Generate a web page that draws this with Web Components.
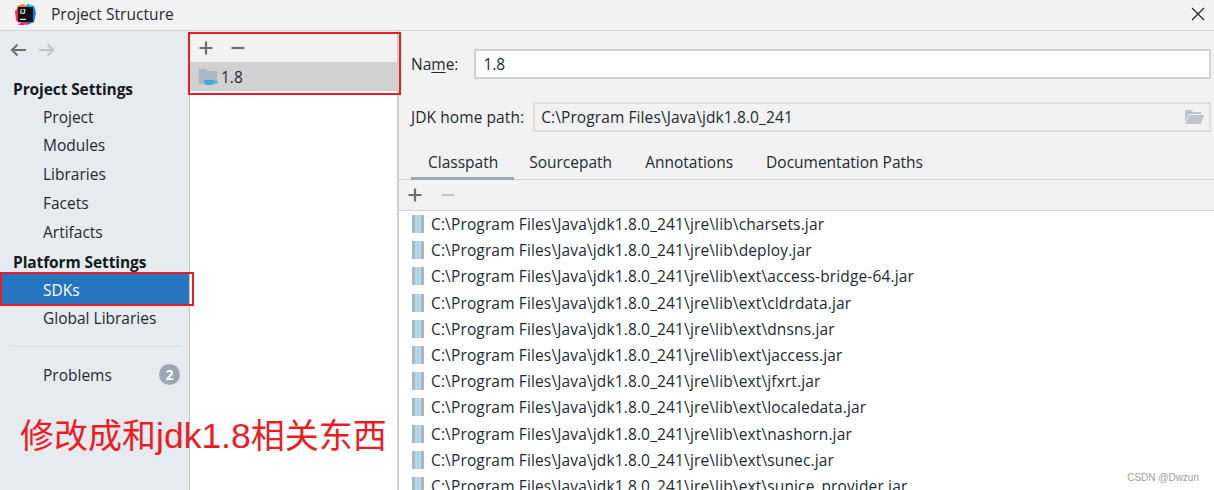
<!DOCTYPE html>
<html lang="en"><head><meta charset="utf-8">
<style>
html,body{margin:0;padding:0;height:490px;overflow:hidden;background:#f2f2f2}
body{font-family:"Open Sans","Noto Sans","Noto Sans CJK SC",sans-serif;font-size:15.5px;color:#1a1a1a}
</style></head><body>
<ps-window></ps-window>
<script>
const def=(name,html)=>{customElements.define(name,class extends HTMLElement{
  connectedCallback(){ if(this.shadowRoot) return; const r=this.attachShadow({mode:'open'}); r.innerHTML=html; }
});};
const plus=(c)=>`<svg width="16" height="16" viewBox="0 0 16 16"><path d="M8 1.500v13M1.500 8h13" stroke="${c}" stroke-width="2.2" fill="none"/></svg>`;
const minus=(c)=>`<svg width="16" height="16" viewBox="0 0 16 16"><path d="M1.500 8h13" stroke="${c}" stroke-width="2.2" fill="none"/></svg>`;

def('title-bar',`<style>
:host{display:flex;align-items:center;height:31px;box-sizing:border-box;border-bottom:1px solid #d4d4d4;background:#f2f2f2;padding:0 9px 2px 15px}
.t{margin-left:15px;font-size:15.5px;flex:1;color:#1f2a33;letter-spacing:.05px}
</style>
<svg width="21" height="21" viewBox="0 0 21 21"><path d="M2 2 9 0l3 3-4 6-4 4z" fill="#fc801d"/><path d="M0 7l3-3 3 8-2 7-3-3z" fill="#fe2857"/><path d="M12 0l7 2 2 7-2 9-7 3-6-3z" fill="#087cfa"/><path d="M12 0l7 2-1 4-5-3z" fill="#07c3f2"/><path d="M3 21l5-5 5 3-4 2z" fill="#fe2857"/><rect x="3" y="3" width="15" height="15" fill="#111"/><text x="5" y="10.200" font-size="6.500" font-weight="700" font-family="Liberation Sans" fill="#fff">IJ</text><rect x="5" y="14.800" width="6" height="1.100" fill="#fff"/></svg>
<span class="t">Project Structure</span>
<svg width="14" height="14" viewBox="0 0 14 14"><path d="M1 1l12 12M13 1 1 13" stroke="#222" stroke-width="1.2" fill="none"/></svg>`);

def('nav-head',`<style>:host{display:block;padding-left:13px;font-weight:700;font-size:15.5px;line-height:20px;color:#15191d;letter-spacing:-.1px}</style><slot></slot>`);
def('nav-item',`<style>:host{display:flex;align-items:center;height:28.8px;padding-left:43px;font-size:15.5px;color:#1d2a33;box-sizing:border-box}
:host([selected]){background:#2675bf;color:#fff}</style><slot></slot><slot name="end"></slot>`);

def('side-nav',`<style>
:host{display:flex;flex-direction:column;width:189px;flex:none;background:#e6ebf0;border-right:1px solid #c8c8c8;height:100%}
.hist{display:flex;gap:11px;align-items:center;padding-left:10px;height:38px;margin-bottom:10px}
.h1{margin-bottom:3.300px}
.h2{margin-top:5.900px}
.sep{height:1px;background:#dde1e5;margin:15px 9px 13px 10px}
.badge{margin-left:auto;margin-right:9px;width:21px;height:21px;border-radius:50%;background:#9ba7b3;color:#fff;font:700 14px/21px "Open Sans",sans-serif;text-align:center}
.note{margin:24px 0 0 20px;color:#ed1c24;font-size:34px;line-height:46px;white-space:nowrap;font-family:"Liberation Sans","Noto Sans CJK SC",sans-serif;width:380px;position:relative;z-index:3}
.note span{font-size:35.500px}
</style>
<div class="hist">
<svg width="17" height="14" viewBox="0 0 17 14"><path d="M16 7H2M7.500 1.500 2 7l5.500 5.500" stroke="#6e6e6e" stroke-width="2" fill="none"/></svg>
<svg width="17" height="14" viewBox="0 0 17 14"><path d="M1 7h14M9.500 1.500 15 7l-5.500 5.500" stroke="#c2c2c2" stroke-width="2" fill="none"/></svg>
</div>
<nav-head class="h1">Project Settings</nav-head>
<nav-item>Project</nav-item><nav-item>Modules</nav-item><nav-item>Libraries</nav-item><nav-item>Facets</nav-item><nav-item>Artifacts</nav-item>
<nav-head class="h2">Platform Settings</nav-head>
<nav-item selected style="height:32px;padding-top:3px">SDKs</nav-item>
<nav-item style="height:27px">Global Libraries</nav-item>
<div class="sep"></div>
<nav-item style="height:29px">Problems<span class="badge" slot="end">2</span></nav-item>
<div class="note">修改成和<span>jdk1.8</span>相关东西</div>`);

def('sdk-list',`<style>
:host{display:block;width:207px;flex:none;background:#fff;border-right:2px solid #d0d0d0;height:100%}
.bar{display:flex;gap:16px;align-items:center;height:31px;box-sizing:border-box;padding:2px 0 0 8px;background:#f2f2f2}
.row{display:flex;align-items:center;height:29px;background:#d1d1d1;padding-left:9px;gap:2px;font-size:15.5px;color:#1d2a33}
</style>
<div class="bar">${plus('#6e6e6e')}${minus('#6e6e6e')}</div>
<div class="row"><svg width="20" height="20" viewBox="0 0 20 20"><path d="M0 2h7l2 2h9v13H0z" fill="#a9b7c2"/><path d="M5 13h10v2.500C15 17 13.800 18 12.500 18h-5C6.200 18 5 17 5 15.500z" fill="#3fa9e0"/><path d="M15 14h3v2h-3z" fill="none" stroke="#3fa9e0" stroke-width="1"/></svg><span>1.8</span></div>`);

def('jar-row',`<style>
:host{display:flex;align-items:center;height:26.200px;padding-left:13px;gap:7px;font-size:15.5px;color:#1d2a33;white-space:nowrap;letter-spacing:.14px}
</style>
<svg width="12" height="18" viewBox="0 0 12 18" style="flex:none"><rect width="12" height="18" fill="#a9b7c2"/><rect x="3.500" width="5" height="18" fill="#dceef7"/><path d="M4.500 1h3M4.500 3h3M4.500 5h3M4.500 7h3M4.500 9h3M4.500 11h3M4.500 13h3M4.500 15h3M4.500 17h3" stroke="#58aee0" stroke-width=".9"/></svg><slot></slot>`);

def('sdk-detail',`<style>
:host{display:flex;flex-direction:column;flex:1;min-width:0;height:100%;background:#f2f2f2;overflow:hidden}
.f{display:flex;align-items:center;color:#1d2a33}
.name{height:30px;margin:18px 3px 0 12px;gap:16px}
u{text-underline-offset:2px}
.inp{box-sizing:border-box;height:30px;flex:1;border:2px solid #d2d2d2;background:#fff;padding-left:7px;line-height:26px;min-width:0}
.home{height:30px;margin:23px 3px 0 12px;gap:9px}
.home>span{letter-spacing:.08px}
.ro{background:#f2f2f2;display:flex;align-items:center;justify-content:space-between;padding-right:5px;padding-left:6px;letter-spacing:.1px;border-color:#dcdcdc}
.tabline{border-bottom:1px solid #d2d2d2;margin-top:17px;display:flex;height:31px;padding-left:12px;box-sizing:border-box}
.tab{padding:0 18px 0 15px;line-height:27px;height:31px;box-sizing:border-box;color:#1d2a33}
.tab.on{border-bottom:3px solid #9aa7b5;padding:0 16px 0 17px}
.bar{display:flex;gap:17px;align-items:center;height:31px;padding-left:8px;border-bottom:1px solid #d2d2d2;box-sizing:border-box}
.list{flex:1;background:#fff;overflow:hidden}
</style>
<div class="f name"><span>Na<u>m</u>e:</span><div class="inp">1.8</div></div>
<div class="f home"><span>JDK home path:</span><div class="inp ro"><span>C:\\Program Files\\Java\\jdk1.8.0_241</span>
<svg width="19" height="14" viewBox="0 0 19 14"><path d="M0 0h6l2 2h8v2H4L0 12z" fill="#bcc5cc"/><path d="M4.500 5H19l-3 9H0z" fill="#bcc5cc"/></svg></div></div>
<div class="tabline"><div class="tab on">Classpath</div><div class="tab">Sourcepath</div><div class="tab">Annotations</div><div class="tab">Documentation Paths</div></div>
<div class="bar">${plus('#6e6e6e')}${minus('#c4c4c4')}</div>
<div class="list">
${['charsets.jar','deploy.jar','ext\\access-bridge-64.jar','ext\\cldrdata.jar','ext\\dnsns.jar','ext\\jaccess.jar','ext\\jfxrt.jar','ext\\localedata.jar','ext\\nashorn.jar','ext\\sunec.jar','ext\\sunjce_provider.jar'].map(s=>`<jar-row>C:\\Program Files\\Java\\jdk1.8.0_241\\jre\\lib\\${s}</jar-row>`).join('')}
</div>`);

def('ps-window',`<style>
:host{display:flex;flex-direction:column;width:1214px;height:490px;position:relative;overflow:hidden}
.body{display:flex;flex:1;min-height:0}
.mark{position:absolute;border:2px solid #ed1c24;box-sizing:border-box;pointer-events:none;z-index:2}
.wm{position:absolute;right:15px;bottom:7px;font:10px "Liberation Sans",sans-serif;color:#a0a0a0;z-index:2}
</style>
<title-bar></title-bar>
<div class="body"><side-nav></side-nav><sdk-list></sdk-list><sdk-detail></sdk-detail></div>
<div class="mark" style="left:188px;top:32px;width:213px;height:63px"></div>
<div class="mark" style="left:0;top:272px;width:194px;height:34px"></div>
<div class="wm">CSDN @Dwzun</div>`);
</script>
</body></html>
